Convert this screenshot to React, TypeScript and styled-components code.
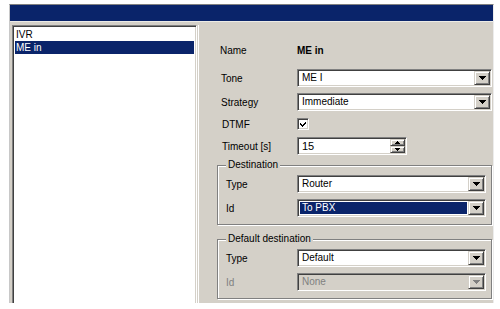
import React from "react";
import styled, { createGlobalStyle } from "styled-components";

const Global = createGlobalStyle`
  html, body { margin: 0; padding: 0; background: #fff; }
  body { font-family: "Liberation Sans", Arial, sans-serif; font-size: 10px; color: #000; }
  * { box-sizing: border-box; }
`;

const Window = styled.div`
  margin: 4px 0 0 9px;
  width: 485px;
  height: 299px;
  background: #d4d0c8;
  border-top: 1px solid #808080;
  border-left: 1px solid #c8c8c8;
  border-right: 1px solid #ececec;
  display: flex;
  flex-direction: column;
`;

const TitleBar = styled.div`
  flex: none;
  height: 17px;
  background: #0a246a;
  border-bottom: 1px solid #ecebe6;
`;

const Body = styled.div`
  flex: 1;
  min-height: 0;
  display: flex;
  padding: 3px 0 0 2px;
`;

const List = styled.div`
  width: 185px;
  flex: none;
  background: #fff;
  border: 1px solid;
  border-color: #808080 #fff #fff #808080;
  box-shadow: inset 1px 1px #404040, inset -1px -1px #d4d0c8;
  padding: 2px 2px 0 2px;
  margin-bottom: -2px;
`;

const ListItem = styled.div<{ $selected?: boolean }>`
  height: 13px;
  line-height: 13px;
  padding-left: 1px;
  background: ${(p) => (p.$selected ? "#0a246a" : "transparent")};
  color: ${(p) => (p.$selected ? "#fff" : "#000")};
  white-space: nowrap;
`;

const Panel = styled.div`
  flex: 1;
  margin-left: 1px;
  border-left: 1px solid #fff;
  padding: 16px 1px 0 18px;
  display: flex;
  flex-direction: column;
`;

const Row = styled.div<{ $top?: number; $indent?: number }>`
  display: flex;
  align-items: center;
  height: 18px;
  margin-top: ${(p) => p.$top ?? 0}px;
  padding-left: ${(p) => p.$indent ?? 0}px;
`;

const Label = styled.div<{ $w: number; $disabled?: boolean }>`
  width: ${(p) => p.$w}px;
  flex: none;
  color: ${(p) => (p.$disabled ? "#808080" : "#000")};
  white-space: nowrap;
`;

const Value = styled.div`
  font-weight: bold;
`;

const Combo = styled.div<{ $disabled?: boolean }>`
  flex: 1;
  height: 18px;
  display: flex;
  align-items: stretch;
  background: ${(p) => (p.$disabled ? "#d4d0c8" : "#fff")};
  border: 1px solid;
  border-color: #808080 #fff #fff #808080;
  box-shadow: inset 1px 1px #404040, inset -1px -1px #d4d0c8;
  padding: 1px;
`;

const ComboText = styled.div<{ $selected?: boolean; $disabled?: boolean }>`
  flex: 1;
  margin: 1px 1px 1px 1px;
  padding-left: 2px;
  line-height: 12px;
  white-space: nowrap;
  background: ${(p) => (p.$selected ? "#0a246a" : "transparent")};
  color: ${(p) => (p.$selected ? "#fff" : p.$disabled ? "#808080" : "#000")};
`;

const DropButton = styled.div`
  width: 16px;
  flex: none;
  background: #d4d0c8;
  border: 1px solid;
  border-color: #d4d0c8 #404040 #404040 #d4d0c8;
  box-shadow: inset 1px 1px #fff, inset -1px -1px #808080;
  display: flex;
  align-items: center;
  justify-content: center;
`;

const Arrow = ({ up, color = "#000", w = 7 }: { up?: boolean; color?: string; w?: number }) => {
  const h = Math.ceil(w / 2);
  return (
    <svg width={w} height={h} viewBox={`0 0 ${w} ${h}`} shapeRendering="crispEdges">
      <polygon
        points={up ? `0,${h} ${w},${h} ${w / 2},0` : `0,0 ${w},0 ${w / 2},${h}`}
        fill={color}
      />
    </svg>
  );
};

const ComboBox = ({
  text,
  selected,
  disabled,
}: {
  text: string;
  selected?: boolean;
  disabled?: boolean;
}) => (
  <Combo $disabled={disabled}>
    <ComboText $selected={selected} $disabled={disabled}>
      {text}
    </ComboText>
    <DropButton>
      <Arrow color={disabled ? "#808080" : "#000"} />
    </DropButton>
  </Combo>
);

const CheckBox = styled.div`
  width: 12px;
  height: 12px;
  background: #fff;
  border: 1px solid;
  border-color: #808080 #fff #fff #808080;
  box-shadow: inset 1px 1px #404040, inset -1px -1px #d4d0c8;
  display: flex;
  align-items: center;
  justify-content: center;
`;

const Spin = styled.div`
  width: 110px;
  height: 18px;
  display: flex;
  background: #fff;
  border: 1px solid;
  border-color: #808080 #fff #fff #808080;
  box-shadow: inset 1px 1px #404040, inset -1px -1px #d4d0c8;
  padding: 1px;
`;

const SpinText = styled.div`
  flex: 1;
  padding: 1px 0 0 3px;
  line-height: 12px;
  font-size: 11px;
`;

const SpinButtons = styled.div`
  width: 15px;
  flex: none;
  display: flex;
  flex-direction: column;
`;

const SpinButton = styled.div`
  flex: 1;
  background: #d4d0c8;
  border: 1px solid;
  border-color: #d4d0c8 #404040 #404040 #d4d0c8;
  box-shadow: inset 1px 1px #fff, inset -1px -1px #808080;
  display: flex;
  align-items: center;
  justify-content: center;
`;

const Group = styled.div<{ $top: number }>`
  position: relative;
  margin-top: ${(p) => p.$top}px;
  border: 1px solid #808080;
  box-shadow: inset 1px 1px #fff, 1px 1px #fff;
  padding: 9px 5px 7px 0;
  display: flex;
  flex-direction: column;
  gap: 6px;
`;

const Legend = styled.div`
  position: absolute;
  top: -7px;
  left: 8px;
  padding: 0 2px;
  background: #d4d0c8;
  line-height: 12px;
  white-space: nowrap;
`;

export default function App() {
  return (
    <>
      <Global />
      <Window>
        <TitleBar />
        <Body>
          <List>
            <ListItem>IVR</ListItem>
            <ListItem $selected>ME in</ListItem>
          </List>
          <Panel>
            <Row $indent={3}>
              <Label $w={77}>Name</Label>
              <Value>ME in</Value>
            </Row>
            <Row $top={10} $indent={4}>
              <Label $w={76}>Tone</Label>
              <ComboBox text="ME I" />
            </Row>
            <Row $top={6} $indent={4}>
              <Label $w={76}>Strategy</Label>
              <ComboBox text="Immediate" />
            </Row>
            <Row $top={4} $indent={5}>
              <Label $w={75}>DTMF</Label>
              <CheckBox>
                <svg width="8" height="8" viewBox="0 0 8 8" shapeRendering="crispEdges">
                  <path d="M1 3 L3 5 L7 1 L7 3 L3 7 L1 5 Z" fill="#000" />
                </svg>
              </CheckBox>
            </Row>
            <Row $top={4} $indent={5}>
              <Label $w={75}>Timeout [s]</Label>
              <Spin>
                <SpinText>15</SpinText>
                <SpinButtons>
                  <SpinButton>
                    <Arrow up w={5} />
                  </SpinButton>
                  <SpinButton>
                    <Arrow w={5} />
                  </SpinButton>
                </SpinButtons>
              </Spin>
            </Row>
            <Group $top={10}>
              <Legend>Destination</Legend>
              <Row $indent={8}>
                <Label $w={71}>Type</Label>
                <ComboBox text="Router" />
              </Row>
              <Row $indent={8}>
                <Label $w={71}>Id</Label>
                <ComboBox text="To PBX" selected />
              </Row>
            </Group>
            <Group $top={14}>
              <Legend>Default destination</Legend>
              <Row $indent={8}>
                <Label $w={71}>Type</Label>
                <ComboBox text="Default" />
              </Row>
              <Row $indent={8}>
                <Label $w={71} $disabled>
                  Id
                </Label>
                <ComboBox text="None" disabled />
              </Row>
            </Group>
          </Panel>
        </Body>
      </Window>
    </>
  );
}
